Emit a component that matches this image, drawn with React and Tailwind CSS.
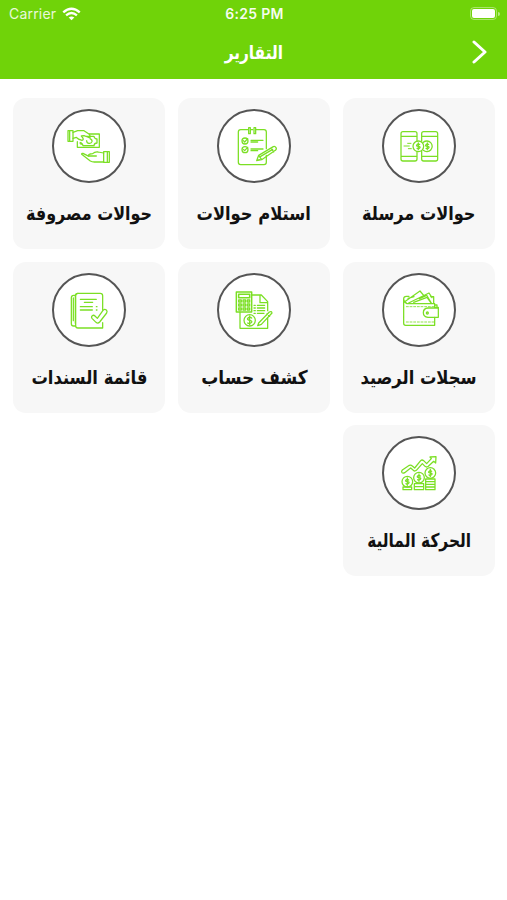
import React from "react";

const SentIcon = () => (
  <>
    <path d="M54 46V23q0-6-6-6H12q-6 0-6 6v76q0 6 6 6h36q6 0 6-6V76M6 31h48M6 91h48" />
    <path d="M68 46V23q0-6 6-6h36q6 0 6 6v76q0 6-6 6H74q-6 0-6-6V76M68 31h48M68 91h48" />
    <circle cx="58" cy="61" r="16" />
    <path d="M73 49a16 16 0 1 1 0 24" />
    <path d="M62 56q-4-4-8 0t4 5 4 5-8 1M58 51v20M89 56q-4-4-8 0t4 5 4 5-8 1M85 51v20" />
    <path d="M15 60h16M26 52h10M28 68h9" strokeWidth="3" />
  </>
);

const ReceiveIcon = () => (
  <>
    <path d="M42 11H20q-7 0-7 7v91q0 7 7 7h70q7 0 7-7V88M66 11h24q7 0 7 7v50M51 11h5" />
    <path d="M44 5v18h5V5zM60 5v18h5V5z" />
    <circle cx="33" cy="45" r="9" />
    <circle cx="33" cy="71" r="9" />
    <path d="m28 44 4 4 9-10M28 70l4 4 9-10M51 43h36M51 48h20M51 69h36M51 74h20" />
    <path d="m68 104 6-16 44-26q5-2 8 3t-2 8L83 101zM74 88l9 13M111 66l8 12M80 91l36-21M68 104l8-3" />
  </>
);

const SpentIcon = () => (
  <>
    <path d="M-3 14h15v32H-3zM2 15v30" />
    <path d="m12 19 14-5h19l16 11 3 7q-2 5-8 1l-11-4-8 1 4 5q4 7-2 8-12-3-17-9l-10 3" />
    <path d="M61 24h30v40H25V47M52 31h23q2 8 9 8v12q-8 0-9 8H42q-2-8-9-8M36 49v6" />
    <path d="M63 38q7 3 6 9-2 6-9 5-7-1-7-8" />
    <path d="M104 77h17v32h-17zM115 78v30" />
    <path d="m104 81-17-3q-10-1-16 5l-8 1q-7 3-3 6h22M60 91l-18-9q-5-1-4 3l26 20q5 3 12 3h28" />
  </>
);

const BalanceIcon = () => (
  <>
    <path d="M14 44V26q0-7 8-7h8M14 27q0 9 10 14h83v11M107 82v24H20q-6 0-6-6V39" />
    <path d="m17 35 46-32 11 13M29 39l61-30 9 14M44 37l40-15 12 17M27 25l18-5M61 26l22-10 14 23M95 20h9v19" />
    <path d="M107 52h11V82h-31q-14-2-14-14 0-13 14-14h31M107 45h7v7" />
    <circle cx="85" cy="69" r="3" />
    <path d="M22 50h82M22 96h82" strokeDasharray="6 5" strokeWidth="2.5" />
  </>
);

const StatementIcon = () => (
  <>
    <path d="M7 6h46v60H7zM14 13h33v10H14z" strokeWidth="4.5" />
    <path
      d="M14 30h8v6h-8zM27 30h8v6h-8zM40 30h7v6h-7zM14 42h8v6h-8zM27 42h8v6h-8zM40 42h7v6h-7zM14 54h8v6h-8zM27 54h8v6h-8zM40 54h7v6h-7z"
    />
    <path d="M53 15h29l19 20v27M101 84v31H18V66M78 15v23h23" />
    <path d="M70 46h22M70 54h22M70 62h22M70 70h20" />
    <path d="M60 46h4M60 54h4M60 62h4M60 70h4" />
    <circle cx="47" cy="91" r="17" />
    <path d="M53 84q-6-5-11 0t5 7 5 7-11 1M47 78v26" />
    <path d="m74 99 32-33q7-4 8 3l-32 34-11 4zM99 71l8 8" />
  </>
);

const VouchersIcon = () => (
  <>
    <path d="M101 60V17q0-7-7-7H27q-7 0-7 7v90q0 7 7 7h74V98" />
    <path d="M27 10q-7 0-8 6h-5q-7 0-7 7v78q0 7 7 7h5M13 24v68M19 16v84" />
    <path d="M34 28h48M46 37h25M34 50h36M34 60h36M82 50h2M82 60h2" />
    <path d="m68 79q5-6 10-1l7 7 17-24q5-5 10-1 4 4 1 9L92 96q-5 6-11 1L69 85q-2-3-1-6z" />
  </>
);

const FinanceIcon = () => (
  <>
    <path d="M9 59q-3-4 1-8l21-14q5-2 9 2l7 6 18-22q4-4 9 0l9 9 14-15-4-5 18-1-1 19-6-5-16 15q-5 4-10 0l-8-8-18 20q-5 4-9 0l-8-7-18 14q-5 3-8 0z" />
    <circle cx="25" cy="86" r="16" />
    <circle cx="60" cy="74" r="16" />
    <circle cx="94" cy="60" r="16" />
    <path d="M29 81q-4-4-8 0t4 5 4 5-8 1M25 75v22M64 69q-4-4-8 0t4 5 4 5-8 1M60 63v22M98 55q-4-4-8 0t4 5 4 5-8 1M94 49v22" />
    <path d="M12 102h26v8H12zM46 92h28v18H46zM46 101h28M80 78h28v32H80zM80 86h28M80 94h28M80 102h28" />
  </>
);

const reports = [
  { title: "حوالات مرسلة", icon: SentIcon, stretch: "scale-x-[0.85]" },
  { title: "استلام حوالات", icon: ReceiveIcon, stretch: "scale-x-[0.857]" },
  { title: "حوالات مصروفة", icon: SpentIcon, stretch: "scale-x-[0.84]" },
  { title: "سجلات الرصيد", icon: BalanceIcon, stretch: "scale-x-[0.86]" },
  { title: "كشف حساب", icon: StatementIcon, stretch: "scale-x-[0.895]" },
  { title: "قائمة السندات", icon: VouchersIcon, stretch: "scale-x-[0.86]" },
  { title: "الحركة المالية", icon: FinanceIcon, stretch: "scale-x-[0.81]" },
];

const StatusBar = () => (
  <div
    dir="ltr"
    className="grid grid-cols-3 items-center h-[27px] pl-[9px] pr-[7px] font-['Inter','Liberation_Sans',sans-serif] text-[14px]"
  >
    <div className="flex items-center gap-[6px] text-white/85">
      <span className="tracking-[0.2px]">Carrier</span>
      <svg viewBox="0 0 20 14" className="w-[19px] h-[14px]" fill="none" stroke="white" strokeWidth="2.5">
        <path d="M1.3 5.2Q10-2.4 18.7 5.2M4.3 8.4q5.7-4.8 11.4 0" />
        <path d="m7 10.600q3-2.200 6 0l-3 3z" fill="white" stroke="none" />
      </svg>
    </div>
    <span className="text-center font-semibold tracking-[0.3px] whitespace-nowrap text-white/95">6:25 PM</span>
    <div className="flex items-center justify-end gap-px">
      <div className="w-[27px] h-[13px] rounded-[4px] border border-white/40 p-px">
        <div className="w-full h-full rounded-[2px] bg-white" />
      </div>
      <div className="w-[2px] h-1 rounded-r-full bg-white/50" />
    </div>
  </div>
);

const ReportCard = ({ title, icon: Icon, stretch }) => (
  <button className="flex flex-col items-center h-[151px] pt-[11px] rounded-[13px] bg-[#f7f7f7]">
    <span className="flex items-center justify-center w-[74px] h-[74px] rounded-full border-2 border-[#555] bg-white">
      <svg
        viewBox="0 0 120 120"
        className="w-10 h-10 shrink-0 overflow-visible"
        fill="none"
        stroke="#7bdf24"
        strokeWidth="3.8"
        strokeLinecap="round"
        strokeLinejoin="round"
      >
        <Icon />
      </svg>
    </span>
    <span className={`mt-[17px] text-[19px] leading-[26px] font-bold whitespace-nowrap text-[#111] ${stretch}`}>
      {title}
    </span>
  </button>
);

const App = () => {
  return (
    <div dir="rtl" className="min-h-screen bg-white font-['DejaVu_Sans',sans-serif]">
      <header className="h-[79px] bg-[#70d309] text-white">
        <StatusBar />
        <div className="grid grid-cols-3 items-center h-[50px] px-5">
          <svg
            viewBox="0 0 16 24"
            className="w-4 h-6"
            fill="none"
            stroke="white"
            strokeWidth="3"
            strokeLinecap="round"
            strokeLinejoin="round"
          >
            <path d="m3 2 11 10L3 22" />
          </svg>
          <h1 className="text-center text-[19px] font-bold scale-x-[0.81]">التقارير</h1>
        </div>
      </header>

      {/* Reports grid */}
      <main className="grid grid-cols-3 gap-x-[13px] gap-y-[12.5px] pt-[19px] pr-3 pl-[13px]">
        {reports.map((report) => (
          <ReportCard key={report.title} {...report} />
        ))}
      </main>
    </div>
  );
};

export default App;
